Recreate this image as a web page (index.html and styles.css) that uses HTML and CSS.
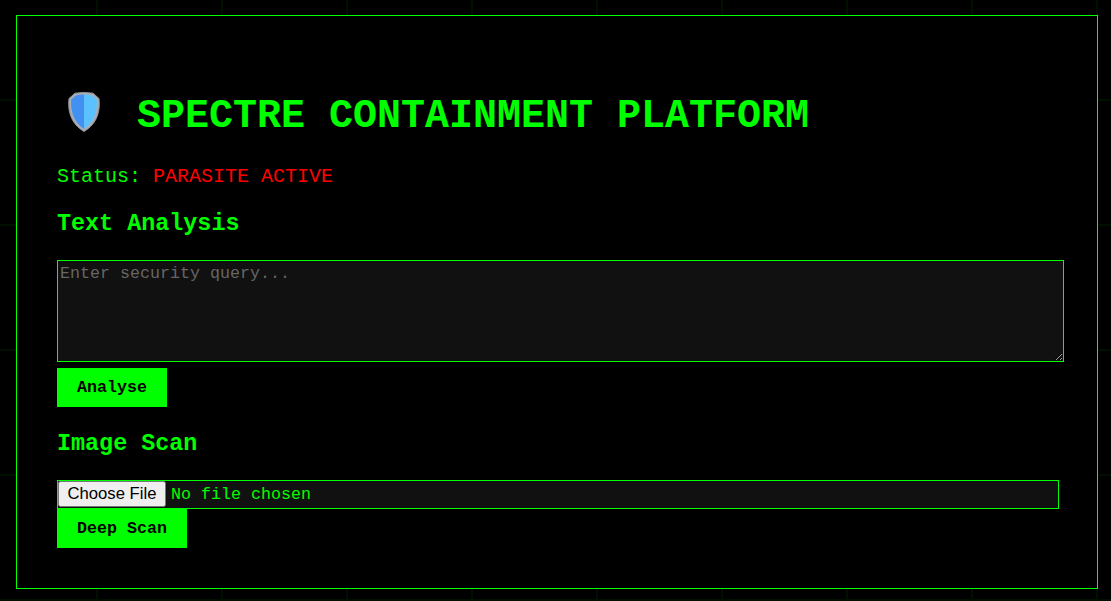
FILE: index.html
```html
<!DOCTYPE html>
<html lang="en">
<head>
<meta charset="utf-8">
<title>Spectre Containment Platform</title>
<link rel="stylesheet" href="styles.css">
</head>
<body>
<main class="panel">
  <h1 class="title"><svg class="shield" viewBox="0 0 34 42" width="34" height="42" aria-hidden="true"><path d="M8 2.2 Q17 0.6 26 2.2 L32 7.5 C33.5 20 30 33 17 40.5 C4 33 0.5 20 2 7.5 Z" fill="#a9aeb6" stroke="#8e939b" stroke-width="1"/><path d="M17 3.5 Q12.5 3.6 9 4.5 L4.2 8.6 C3.4 19 6 31 17 38 Z" fill="#4290f2"/><path d="M17 3.5 Q21.5 3.6 25 4.5 L29.8 8.6 C30.6 19 28 31 17 38 Z" fill="#5cc2ff"/></svg><span>SPECTRE CONTAINMENT PLATFORM</span></h1>
  <p class="status">Status: <span class="alert">PARASITE ACTIVE</span></p>
  <h2 class="section">Text Analysis</h2>
  <textarea class="query" placeholder="Enter security query..."></textarea>
  <button class="action" type="button">Analyse</button>
  <h2 class="section">Image Scan</h2>
  <input class="file" type="file">
  <button class="action" type="button">Deep Scan</button>
</main>
</body>
</html>
```
FILE: styles.css
```css
* { box-sizing: border-box; }
html, body { height: 100%; }
body {
  margin: 0;
  padding: 15px 13px 12px 16px;
  background-color: #000;
  background-image:
    linear-gradient(#000f00 2px, transparent 2px),
    linear-gradient(90deg, #000f00 2px, transparent 2px);
  background-size: 125px 125px;
  background-position: 96px 99px;
  font-family: "Liberation Mono", monospace;
  color: #00ff00;
  overflow: hidden;
}
.panel {
  height: 574px;
  background: #000;
  border: 1px solid #00ff00;
  padding: 40px;
}
.title {
  display: flex;
  align-items: center;
  gap: 36px;
  margin: 36px 0 0;
  height: 50px;
  font-size: 40px;
  line-height: 46px;
  font-weight: 700;
}
.shield { flex: none; margin-left: 10px; margin-top: -11px; }
.status { margin: 24px 0 0; font-size: 20px; line-height: 22px; }
.alert { color: #ff0000; }
.section { margin: 23px 0 0; font-size: 23.4px; line-height: 26px; font-weight: 700; }
.action + .section { margin-top: 24px; }
.query {
  display: block;
  width: 1007px;
  height: 102px;
  margin: 23px 0 0;
  padding: 3px 2px 2px;
  background: #111;
  border: 1px solid #00ff00;
  color: #00ff00;
  font: 16.67px/19px "Liberation Mono", monospace;
}
.query::placeholder { color: #666; }
.action {
  display: block;
  margin: 6px 0 0;
  padding: 10px 20px;
  height: 39px;
  border: 0;
  background: #00ff00;
  color: #000;
  font: 700 16.67px "Liberation Mono", monospace;
}
.file {
  display: block;
  width: 1002px;
  height: 29px;
  margin: 23px 0 0;
  padding: 0;
  background: #111;
  border: 1px solid #00ff00;
  color: #00ff00;
  font: 16.67px "Liberation Mono", monospace;
}
.file + .action { margin-top: 0; }
.file::file-selector-button {
  width: 108px;
  height: 26px;
  padding: 0;
  font: 16.67px "Liberation Sans", sans-serif;
  margin-right: 5px;
}
```
